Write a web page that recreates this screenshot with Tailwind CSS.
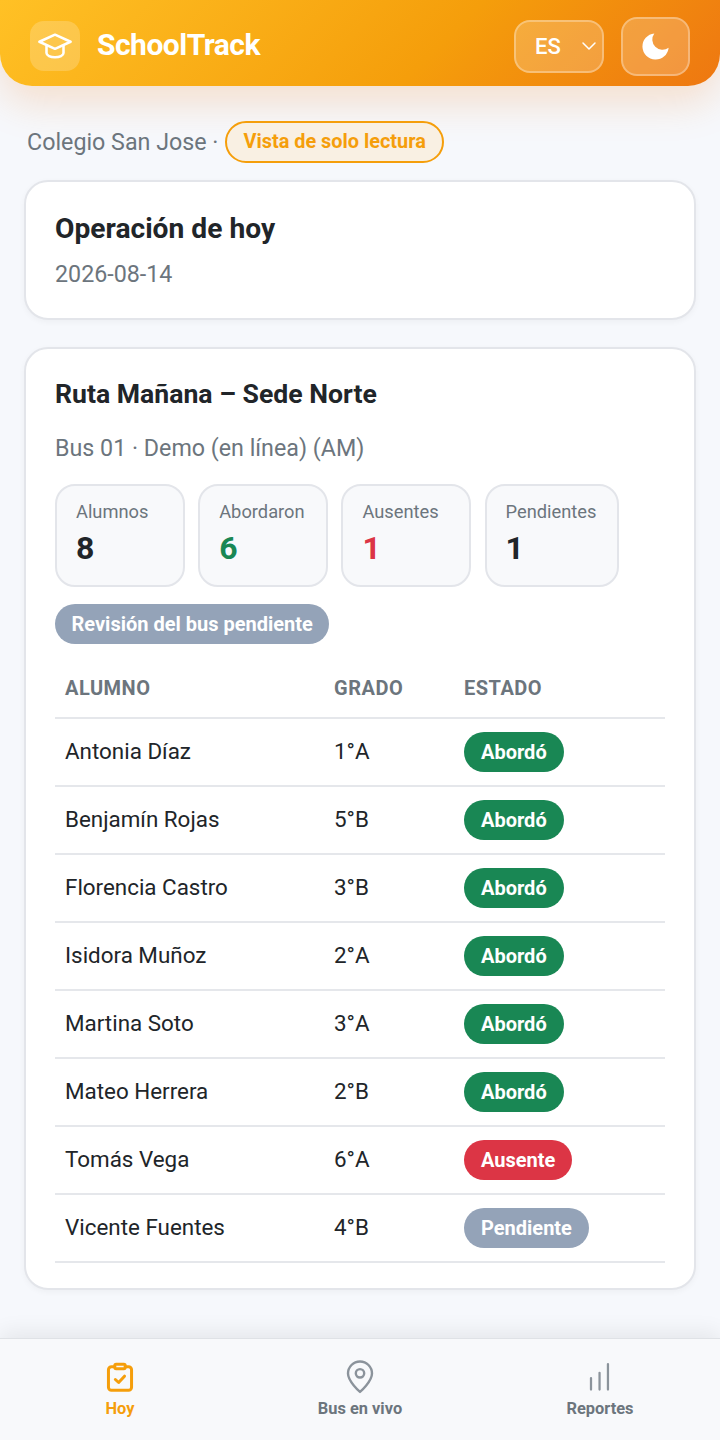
<!DOCTYPE html>
<html lang="es">
<head>
  <meta charset="UTF-8" />
  <meta name="viewport" content="width=device-width, initial-scale=1.0"/>
  <title>SchoolTrack</title>
  <script src="https://cdn.jsdelivr.net/npm/@tailwindcss/browser@4"></script>
</head>
<body class="bg-[#f6f8fc]">
  <div class="h-[1440px] w-[720px] flex flex-col overflow-hidden font-['Roboto',sans-serif] text-[#212529]">

    <!-- header -->
    <header class="h-[86px] shrink-0 flex items-center justify-between pt-[6px] px-[30px] rounded-b-[32px] bg-[linear-gradient(135deg,#ffc125_0%,#f59e0b_60%,#ee7711_100%)] shadow-[0_16px_40px_rgba(238,119,17,0.2)]">
      <div class="flex items-center gap-[17px]">
        <div class="w-[50px] h-[50px] rounded-[14px] bg-white/20 flex items-center justify-center">
          <svg width="34" height="34" viewBox="0 0 24 24" fill="none" stroke="white" stroke-width="1.8" stroke-linecap="round" stroke-linejoin="round"><path d="M12 4 23 9 12 14 1 9z"/><path d="M6 12v5a6 3 0 0 0 12 0v-5"/></svg>
        </div>
        <span class="text-[30px] -mt-[3px] font-bold tracking-[-0.5px] text-white">SchoolTrack</span>
      </div>
      <div class="flex items-center gap-[17px]">
        <div class="relative w-[90px] h-[53px] rounded-[16px] border-2 border-white/30 bg-white/20 flex items-center pl-[19px] text-[22px] font-medium text-white">
          ES
          <svg class="absolute right-[5px] top-[16px]" width="16" height="16" viewBox="0 0 16 16" fill="none" stroke="white" stroke-width="1.5" stroke-linecap="round" stroke-linejoin="round"><path d="M2 5l6 6 6-6"/></svg>
        </div>
        <div class="w-[69px] h-[59px] rounded-[16px] border-2 border-white/30 bg-white/20 flex items-center justify-center">
          <svg width="35" height="35" viewBox="0 0 24 24" fill="white"><path d="M21 12.8A9 9 0 1 1 11.2 3a7 7 0 0 0 9.8 9.8z"/></svg>
        </div>
      </div>
    </header>

    <main class="flex-1 px-[24px]">
      <div class="flex items-center h-[42px] mt-[35px] pl-[3px] gap-[7px]">
        <span class="text-[23.25px] text-[#6c757d]">Colegio San Jose ·</span>
        <span class="h-[42px] px-[16px] flex items-center rounded-full border-2 border-[#f59e0b] bg-[#f9f0e3] text-[19.9px] font-bold text-[#f59e0b]">Vista de solo lectura</span>
      </div>

      <section class="mt-[17px] h-[140px] rounded-[24px] border-2 border-[#e3e5ea] bg-white px-[29px] pt-[28px] shadow-[0_2px_6px_rgba(0,0,0,0.04)]">
        <h2 class="text-[28.2px] leading-[38px] font-bold">Operación de hoy</h2>
        <p class="mt-[10px] text-[23.25px] leading-[32px] text-[#6c757d]">2026-08-14</p>
      </section>

      <section class="mt-[27px] h-[943px] rounded-[24px] border-2 border-[#e3e5ea] bg-white px-[29px] pt-[26px] shadow-[0_2px_6px_rgba(0,0,0,0.04)]">
        <h2 class="text-[26.6px] leading-[38px] font-bold">Ruta Mañana – Sede Norte</h2>
        <p class="mt-[19px] text-[23.25px] leading-[32px] text-[#6c757d]">Bus 01 · Demo (en línea) (AM)</p>

        <div class="flex gap-[13.2px] mt-[20px]">
          <div class="w-[130px] h-[103px] rounded-[20px] border-2 border-[#e3e5ea] bg-[#f8f9fb] pl-[19px] pt-[13px]">
            <div class="text-[18.3px] leading-[26px] text-[#6c757d]">Alumnos</div>
            <div class="text-[32px] leading-[46px] font-bold text-[#212529]">8</div>
          </div>
          <div class="w-[130px] h-[103px] rounded-[20px] border-2 border-[#e3e5ea] bg-[#f8f9fb] pl-[19px] pt-[13px]">
            <div class="text-[18.3px] leading-[26px] text-[#6c757d]">Abordaron</div>
            <div class="text-[32px] leading-[46px] font-bold text-[#198754]">6</div>
          </div>
          <div class="w-[130px] h-[103px] rounded-[20px] border-2 border-[#e3e5ea] bg-[#f8f9fb] pl-[19px] pt-[13px]">
            <div class="text-[18.3px] leading-[26px] text-[#6c757d]">Ausentes</div>
            <div class="text-[32px] leading-[46px] font-bold text-[#dc3545]">1</div>
          </div>
          <div class="w-[134px] h-[103px] rounded-[20px] border-2 border-[#e3e5ea] bg-[#f8f9fb] pl-[19px] pt-[13px]">
            <div class="text-[18.3px] leading-[26px] text-[#6c757d]">Pendientes</div>
            <div class="text-[32px] leading-[46px] font-bold text-[#212529]">1</div>
          </div>
        </div>

        <div class="mt-[17px] inline-flex items-center h-[40px] px-[16.5px] rounded-full bg-[#94a3b8] text-[20px] font-bold text-white">Revisión del bus pendiente</div>

        <table class="w-[610px] mt-[8px] border-collapse table-fixed">
          <thead>
            <tr class="h-[66px] border-b-2 border-[#e5e7eb] text-left text-[20px] tracking-[0.5px] text-[#6c757d]">
              <th class="w-[279px] pl-[10px] pt-[6px] font-bold">ALUMNO</th>
              <th class="w-[130px] pt-[6px] font-bold">GRADO</th>
              <th class="pt-[6px] font-bold">ESTADO</th>
            </tr>
          </thead>
          <tbody class="text-[22.4px]">
            <tr class="h-[68px] border-b-2 border-[#e5e7eb]"><td class="pl-[10px]">Antonia Díaz</td><td>1°A</td><td><span class="inline-flex items-center h-[40px] px-[17px] rounded-full bg-[#198754] text-[20px] font-bold text-white">Abordó</span></td></tr>
            <tr class="h-[68px] border-b-2 border-[#e5e7eb]"><td class="pl-[10px]">Benjamín Rojas</td><td>5°B</td><td><span class="inline-flex items-center h-[40px] px-[17px] rounded-full bg-[#198754] text-[20px] font-bold text-white">Abordó</span></td></tr>
            <tr class="h-[68px] border-b-2 border-[#e5e7eb]"><td class="pl-[10px]">Florencia Castro</td><td>3°B</td><td><span class="inline-flex items-center h-[40px] px-[17px] rounded-full bg-[#198754] text-[20px] font-bold text-white">Abordó</span></td></tr>
            <tr class="h-[68px] border-b-2 border-[#e5e7eb]"><td class="pl-[10px]">Isidora Muñoz</td><td>2°A</td><td><span class="inline-flex items-center h-[40px] px-[17px] rounded-full bg-[#198754] text-[20px] font-bold text-white">Abordó</span></td></tr>
            <tr class="h-[68px] border-b-2 border-[#e5e7eb]"><td class="pl-[10px]">Martina Soto</td><td>3°A</td><td><span class="inline-flex items-center h-[40px] px-[17px] rounded-full bg-[#198754] text-[20px] font-bold text-white">Abordó</span></td></tr>
            <tr class="h-[68px] border-b-2 border-[#e5e7eb]"><td class="pl-[10px]">Mateo Herrera</td><td>2°B</td><td><span class="inline-flex items-center h-[40px] px-[17px] rounded-full bg-[#198754] text-[20px] font-bold text-white">Abordó</span></td></tr>
            <tr class="h-[68px] border-b-2 border-[#e5e7eb]"><td class="pl-[10px]">Tomás Vega</td><td>6°A</td><td><span class="inline-flex items-center h-[40px] px-[17px] rounded-full bg-[#dc3545] text-[20px] font-bold text-white">Ausente</span></td></tr>
            <tr class="h-[68px] border-b-2 border-[#e5e7eb]"><td class="pl-[10px]">Vicente Fuentes</td><td>4°B</td><td><span class="inline-flex items-center h-[40px] px-[17px] rounded-full bg-[#94a3b8] text-[20px] font-bold text-white">Pendiente</span></td></tr>
          </tbody>
        </table>
      </section>
    </main>

    <!-- bottom nav -->
    <nav class="h-[102px] shrink-0 grid grid-cols-3 bg-[#f8f9fb] border-t border-[#dfe2e6] shadow-[0_-6px_20px_rgba(0,0,0,0.07)]">
      <div class="flex flex-col items-center pt-[21px] text-[#f59e0b]">
        <svg width="36" height="36" viewBox="0 0 24 24" fill="none" stroke="currentColor" stroke-width="2" stroke-linecap="round" stroke-linejoin="round"><path d="M8.5 4.5H6.300a2 2 0 0 0-2 2v11.700a2 2 0 0 0 2 2h11.400a2 2 0 0 0 2-2V6.500a2 2 0 0 0-2-2h-2.200"/><rect x="8.5" y="2.800" width="7" height="3" rx="1"/><path d="m8.900 13 2.200 2 3.900-4.200"/></svg>
        <span class="mt-[2px] text-[16.4px] leading-[22px] font-bold">Hoy</span>
      </div>
      <div class="flex flex-col items-center pt-[21px] text-[#6c757d]">
        <svg class="text-[#8b939b]" width="36" height="36" viewBox="0 0 24 24" fill="none" stroke="currentColor" stroke-width="1.6" stroke-linecap="round" stroke-linejoin="round"><path d="M12 21.300s-8-7-8-12.300a8 8 0 0 1 16 0c0 5.300-8 12.300-8 12.300z"/><circle cx="12" cy="8.900" r="2.800"/></svg>
        <span class="mt-[2px] text-[16.4px] leading-[22px] font-bold">Bus en vivo</span>
      </div>
      <div class="flex flex-col items-center pt-[21px] text-[#6c757d]">
        <svg class="text-[#8b939b]" width="36" height="36" viewBox="0 0 24 24" fill="none" stroke="currentColor" stroke-width="1.5" stroke-linecap="round"><path d="M6 19.700V12"/><path d="M11.700 19.700V8.500"/><path d="M17.300 19.700V2.700"/></svg>
        <span class="mt-[2px] text-[16.4px] leading-[22px] font-bold">Reportes</span>
      </div>
    </nav>
  </div>
</body>
</html>
